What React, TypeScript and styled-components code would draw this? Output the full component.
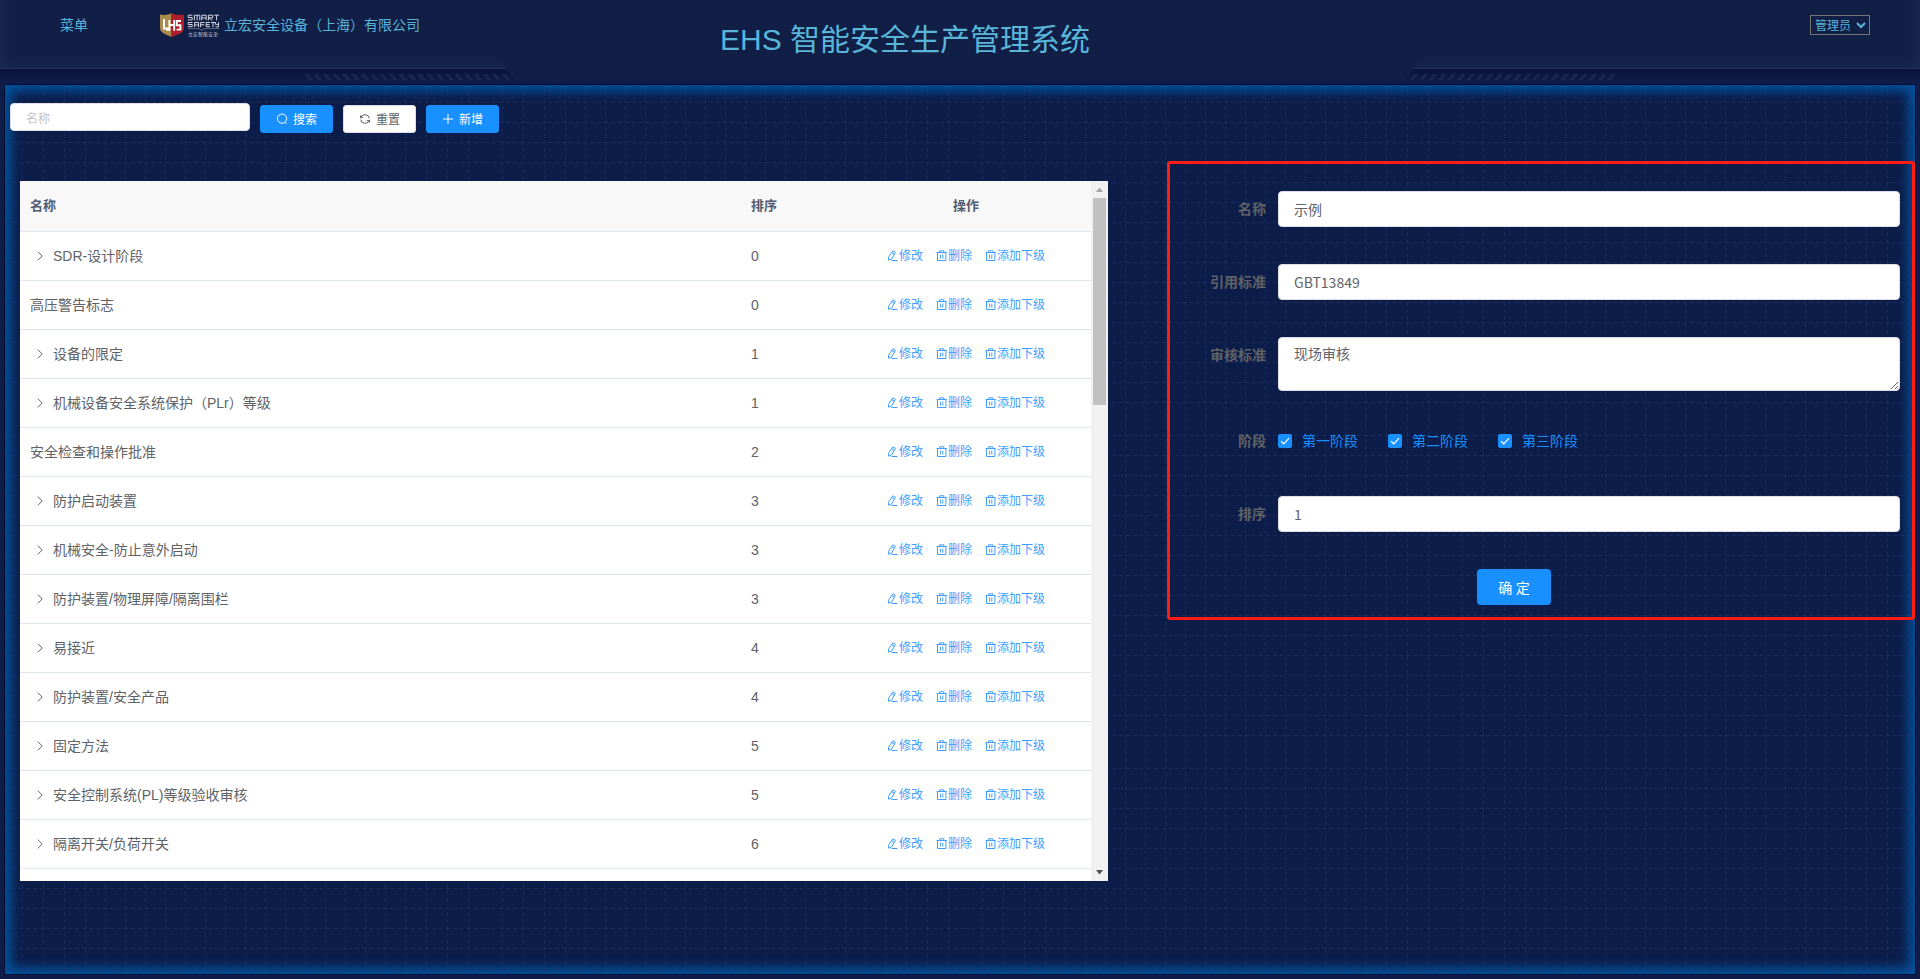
import React from 'react';
import styled, { createGlobalStyle, css } from 'styled-components';

const SANS = '"Liberation Sans", "Noto Sans CJK SC", sans-serif';
const BUTTON_FONT = '"Open Sans", "Noto Sans CJK SC", sans-serif';
const FIELD_FONT = '"Noto Sans CJK SC", sans-serif';

const GlobalStyle = createGlobalStyle`
  *, *::before, *::after { box-sizing: border-box; }
  body {
    margin: 0;
    background: #0e1c47;
    font-family: ${SANS};
    font-size: 14px;
  }
  button, input, textarea, select { font-family: ${BUTTON_FONT}; margin: 0; }
`;

const Page = styled.div`
  display: flex;
  flex-direction: column;
  min-height: 100vh;
`;

/* ---------- header ---------- */

const Header = styled.header`
  position: relative;
  flex: none;
  display: grid;
  grid-template-columns: 3fr 5fr;
  height: 80px;
  margin-bottom: 4px;
  background: #111e45;
  color: #5ab5da;
`;

const Decor = styled.svg<{ $side: 'left' | 'right' }>`
  position: absolute;
  top: 0;
  ${(p) => (p.$side === 'left' ? 'left: 0;' : 'right: 0; transform: scaleX(-1);')}
  pointer-events: none;
`;

const HeaderLeft = styled.div`
  position: relative;
  display: flex;
  align-items: center;
  height: 50px;
  padding-left: 60px;
`;

const HeaderLink = styled.a`
  color: inherit;
  text-decoration: none;
  line-height: 20px;
`;

const Company = styled.div`
  display: flex;
  align-items: center;
  gap: 5px;
  margin-left: 72px;
  line-height: 20px;
`;

const HeaderMain = styled.div`
  position: relative;
  display: flex;
  justify-content: space-between;
  align-items: flex-start;
  padding-right: 50px;
`;

const Title = styled.h1`
  margin: 19px 0 0;
  font-size: 30px;
  line-height: 42px;
  font-weight: 400;
`;

const UserSelect = styled.select`
  width: 60px;
  height: 20px;
  margin-top: 15px;
  padding: 0;
  border: 1px solid #767676;
  border-radius: 0;
  background: transparent;
  color: #5ab5da;
  font-size: 12px;
`;

/* ---------- panel ---------- */

const Panel = styled.main`
  position: relative;
  flex: 1;
  margin: 0 4px 4px;
  padding-bottom: 93px;
  border: 1px solid #030f35;
  background: #0c1d49;
  box-shadow: inset 0 0 12px 6px #0054a0;
`;

const GridSvg = styled.svg`
  position: absolute;
  inset: 0;
  width: 100%;
  height: 100%;
`;

const Toolbar = styled.form`
  position: relative;
  display: flex;
  align-items: flex-end;
  gap: 10px;
  height: 48px;
  padding: 18px 5px 0;
`;

const fieldBase = css`
  border: 1px solid #dcdfe6;
  border-radius: 4px;
  background: #fff;
  color: #606266;
  font-family: ${FIELD_FONT};
  outline: none;
`;

const SearchInput = styled.input`
  ${fieldBase}
  align-self: flex-start;
  width: 240px;
  height: 28px;
  padding: 0 15px;
  font-size: 12px;
  &::placeholder { color: #c0c4cc; opacity: 1; }
`;

const ToolButton = styled.button<{ $plain?: boolean }>`
  display: flex;
  align-items: center;
  gap: 5px;
  height: 28px;
  padding: 0 15px;
  border: 1px solid ${(p) => (p.$plain ? '#dcdfe6' : '#1890ff')};
  border-radius: 3px;
  background: ${(p) => (p.$plain ? '#fff' : '#1890ff')};
  color: ${(p) => (p.$plain ? '#606266' : '#fff')};
  font-size: 12px;
  cursor: pointer;
`;

const Content = styled.div`
  position: relative;
  display: grid;
  grid-template-columns: minmax(0, 1088fr) minmax(0, 748fr);
  align-items: start;
  gap: 59px;
  margin-top: 28px;
  padding-left: 15px;
`;

/* ---------- table ---------- */

const TableBox = styled.section`
  display: flex;
  height: 700px;
  margin-top: 20px;
  background: #fff;
`;

const TableScroll = styled.div`
  flex: 1;
  min-width: 0;
  overflow: hidden;
`;

const Table = styled.table`
  width: 100%;
  border-collapse: separate;
  border-spacing: 0;
  table-layout: fixed;
`;

const Col = styled.col<{ $w?: number }>`
  ${(p) => (p.$w ? `width: ${p.$w}px;` : '')}
`;

const Th = styled.th<{ $center?: boolean }>`
  height: 51px;
  padding: 0 10px 3px;
  border-bottom: 1px solid #dfe6ec;
  background: #f8f8f9;
  color: #515a6e;
  font-size: 13px;
  text-align: ${(p) => (p.$center ? 'center' : 'left')};
`;

const Td = styled.td`
  height: 49px;
  padding: 0 10px;
  border-bottom: 1px solid #dfe6ec;
  color: #606266;
  font-size: 14px;
  line-height: 22px;
`;

const NameCell = styled.div`
  display: flex;
  align-items: center;
`;

const Expander = styled.button`
  display: flex;
  align-items: center;
  justify-content: center;
  width: 20px;
  height: 20px;
  margin-right: 3px;
  padding: 0;
  border: 0;
  background: none;
  color: #606266;
  cursor: pointer;
`;

const Actions = styled.div`
  display: flex;
  justify-content: center;
  gap: 13px;
`;

const TextButton = styled.button`
  display: flex;
  align-items: center;
  padding: 0;
  border: 0;
  background: none;
  color: #409eff;
  font-size: 12px;
  line-height: 16px;
  cursor: pointer;
`;

const ScrollTrack = styled.div`
  flex: none;
  display: flex;
  flex-direction: column;
  justify-content: space-between;
  width: 17px;
  background: #f1f1f1;
`;

const ScrollThumb = styled.div`
  height: 207px;
  margin: 0 2px auto;
  background: #c1c1c1;
`;

/* ---------- form ---------- */

const FormBox = styled.form`
  display: flex;
  flex-direction: column;
  gap: 37px;
  padding: 27px 12px 12px 0;
  border: 3px solid #ff1c12;
  border-radius: 3px;
`;

const FormRow = styled.div<{ $compact?: boolean }>`
  display: grid;
  grid-template-columns: 108px minmax(0, 1fr);
  line-height: ${(p) => (p.$compact ? 26 : 36)}px;
  min-height: ${(p) => (p.$compact ? 31 : 36)}px;
`;

const labelText = css`
  padding-right: 12px;
  color: #606266;
  font-size: 14px;
  font-weight: 700;
  text-align: right;
`;

const Label = styled.label`
  ${labelText}
`;

const GroupLabel = styled.span`
  ${labelText}
`;

const TextField = styled.input`
  ${fieldBase}
  width: 100%;
  height: 36px;
  padding: 0 15px 1px;
  font-size: 14px;
`;

const TextArea = styled.textarea`
  ${fieldBase}
  display: block;
  width: 100%;
  height: 54px;
  padding: 5px 15px;
  font-size: 14px;
  line-height: 21px;
  resize: vertical;
`;

const CheckGroup = styled.div`
  display: flex;
  gap: 30px;
`;

const CheckLabel = styled.label`
  display: flex;
  align-items: center;
  gap: 10px;
  height: 26px;
  color: #1890ff;
  font-size: 14px;
`;

const CheckWrap = styled.span`
  position: relative;
  width: 14px;
  height: 14px;
  svg { position: absolute; inset: 0; pointer-events: none; opacity: 0; }
  input:checked + svg { opacity: 1; }
`;

const Check = styled.input`
  appearance: none;
  display: block;
  width: 14px;
  height: 14px;
  border: 1px solid #dcdfe6;
  border-radius: 2px;
  background: #fff;
  &:checked { border-color: #1890ff; background: #1890ff; }
`;

const FormFooter = styled.div`
  display: flex;
  justify-content: center;
  padding-right: 42px;
`;

const SubmitButton = styled.button`
  width: 74px;
  height: 36px;
  padding: 0;
  border: 0;
  border-radius: 4px;
  background: #1890ff;
  color: #fff;
  font-size: 14px;
  cursor: pointer;
`;

/* ---------- drawings ---------- */

const stroke = { fill: 'none', stroke: 'currentColor', strokeWidth: 1 } as const;

const SearchIcon = () => (
  <svg width="12" height="12" viewBox="0 0 12 12" {...stroke}>
    <circle cx="6" cy="5.6" r="4.6" />
    <path d="M8.8 9.2 10.6 11" />
  </svg>
);

const RefreshIcon = () => (
  <svg width="12" height="12" viewBox="0 0 12 12" {...stroke}>
    <path d="M1.6 5.2V2.2M1.6 4.3H4.4" />
    <path d="M2 4.1A4.4 4.4 0 0 1 10.3 5.4" />
    <path d="M10.4 6.8v3M10.4 7.7H7.6" />
    <path d="M10 7.9A4.4 4.4 0 0 1 1.7 6.6" />
  </svg>
);

const PlusIcon = () => (
  <svg width="12" height="12" viewBox="0 0 12 12" {...stroke}>
    <path d="M6 1v10M1 6h10" />
  </svg>
);

const EditIcon = () => (
  <svg width="12" height="12" viewBox="0 0 12 12" {...stroke}>
    <path d="M5.8 0.8 8.4 2.2 4.6 9 1.4 10.2 1.6 7.2Z" strokeLinejoin="round" />
    <path d="M4.8 2.6 7.4 4.1M4.4 10.5h6.2" />
  </svg>
);

const DeleteIcon = () => (
  <svg width="12" height="12" viewBox="0 0 12 12" {...stroke}>
    <path d="M0.6 2.5h10.2M3.6 2.3V0.8h4.2v1.5M1.5 2.6v7.9h8.4V2.6M4.6 4.6v4M6.8 4.6v4" />
  </svg>
);

const ChevronIcon = () => (
  <svg width="12" height="12" viewBox="0 0 12 12" {...stroke}>
    <path d="M3.8 1.6 8.2 6 3.8 10.4" />
  </svg>
);

const CheckMark = () => (
  <svg width="14" height="14" viewBox="0 0 14 14" fill="none" stroke="#fff" strokeWidth="1.2">
    <path d="M3 7.2 5.8 9.8 11 4.2" />
  </svg>
);

const Arrow = ({ up }: { up?: boolean }) => (
  <svg width="17" height="17" viewBox="0 0 17 17">
    <path d={up ? 'M8.5 6.5 12 11H5Z' : 'M8.5 10.5 5 6h7Z'} fill={up ? '#a3a3a3' : '#505050'} />
  </svg>
);

const LogoText = styled.text`
  font-family: ${SANS};
  fill: #c3c8d6;
`;

const Logo = () => (
  <svg width="59" height="24" viewBox="0 0 59 24" role="img" aria-label="LHS Smart Safety">
    <path d="M0 1.5C5 2.4 9 1.8 11.5 0V24C8 21.5 0 21 0 15Z" fill="#a78c4e" />
    <path d="M24 1.5C19 2.4 14 1.8 11.5 0V24C16 21.5 24 21 24 15Z" fill="#b01d2b" />
    <path
      d="M4 6v9.5h3.4v2.6M9.4 7v10.8M9.4 12h4.2M14.2 7v10.8M21 8h-4.2v4.2h3.6v4.4h-3.8"
      fill="none"
      stroke="#fff"
      strokeWidth="1.9"
    />
    <g fill="none" stroke="#e4e7ee" strokeWidth="0.9">
      <path d="M32.5 2.2h-4.3v2.3h4v2.4h-4.4M34.4 7.4V2.2h5.4v5.2M37.1 2.2v5.2M41.8 7.4V2.2h4.4v5.2M41.8 5h4.4M48.4 7.4V2.2h4.3v2.6h-4.2l4 2.6M54.2 2.2H59M56.6 2.2v5.2" />
      <path d="M32.5 9.5h-4.3v2h4v2.2h-4.4M34.6 14.2V9.5h4v4.7M34.6 12h4M40.6 14.2V9.5h4M40.6 11.8h3.6M50 9.5h-3.8v4.2H50M46.2 11.6h3.4M51 9.5h4M53 9.5v4.7M55.4 9v2.4h3.2M58.6 9v4.9h-3" />
    </g>
    <path d="M28 15.6h11l2.6 1.6 2.6-1.6H59" fill="none" stroke="#8f97ad" strokeWidth="0.6" />
    <LogoText x="28" y="22.6" fontSize="5">
      立宏智能安全
    </LogoText>
  </svg>
);

const HATCHES = Array.from({ length: 22 }, (_, i) => 304 + i * 9.4);

const HeaderDecor = ({ side }: { side: 'left' | 'right' }) => (
  <Decor $side={side} width="560" height="80" viewBox="0 0 560 80">
    <defs>
      <linearGradient id={`glow-${side}`} x1="0" y1="0" x2="0" y2="1">
        <stop offset="0" stopColor="#1b2a55" stopOpacity="0" />
        <stop offset="1" stopColor="#1b2a55" stopOpacity="0.5" />
      </linearGradient>
      <linearGradient id={`edge-${side}`}>
        <stop offset="0" stopColor="#1b2a55" stopOpacity="0.6" />
        <stop offset="1" stopColor="#1b2a55" stopOpacity="0" />
      </linearGradient>
      <linearGradient id={`slot-${side}`} x1="0" y1="0" x2="0" y2="1">
        <stop offset="0" stopColor="#081335" />
        <stop offset="1" stopColor="#0d1b46" />
      </linearGradient>
    </defs>
    <rect width="14" height="68" fill={`url(#edge-${side})`} />
    <path d="M0 54H500L508 68H0Z" fill={`url(#glow-${side})`} />
    <path d="M0 68H506L517 80H0Z" fill={`url(#slot-${side})`} />
    <path d="M0 68.5H506" fill="none" stroke="#22315f" strokeWidth="1" />
    <path d="M506 68.5 517 80" fill="none" stroke="#1a2850" strokeWidth="1" />
    {HATCHES.map((x) => (
      <path key={x} d={`M${x} 74h4l5 6h-4Z`} fill="#1a2850" />
    ))}
  </Decor>
);

const LINES_X = [17, 38, 59, ...Array.from({ length: 17 }, (_, i) => 80 + i * 20), 421, 442, 463];
const LINES_Y = Array.from({ length: 16 }, (_, i) => 17 + i * 20);

const GridBackground = () => (
  <GridSvg aria-hidden="true">
    <defs>
      <pattern id="cells" width="480" height="333" patternUnits="userSpaceOnUse">
        <g stroke="#2a3b78" strokeOpacity="0.42" strokeDasharray="4 3">
          {LINES_X.map((x) => (
            <path key={x} d={`M${x + 0.5} 0V333`} />
          ))}
          {LINES_Y.map((y) => (
            <path key={y} d={`M0 ${y + 0.5}H480`} />
          ))}
        </g>
      </pattern>
    </defs>
    <rect width="100%" height="100%" fill="url(#cells)" />
  </GridSvg>
);

/* ---------- data ---------- */

interface Item {
  name: string;
  order: number;
  leaf?: boolean;
}

const ITEMS: Item[] = [
  { name: 'SDR-设计阶段', order: 0 },
  { name: '高压警告标志', order: 0, leaf: true },
  { name: '设备的限定', order: 1 },
  { name: '机械设备安全系统保护（PLr）等级', order: 1 },
  { name: '安全检查和操作批准', order: 2, leaf: true },
  { name: '防护启动装置', order: 3 },
  { name: '机械安全-防止意外启动', order: 3 },
  { name: '防护装置/物理屏障/隔离围栏', order: 3 },
  { name: '易接近', order: 4 },
  { name: '防护装置/安全产品', order: 4 },
  { name: '固定方法', order: 5 },
  { name: '安全控制系统(PL)等级验收审核', order: 5 },
  { name: '隔离开关/负荷开关', order: 6 },
];

const STAGES = ['第一阶段', '第二阶段', '第三阶段'];

const ItemRow = ({ item }: { item: Item }) => (
  <tr>
    <Td>
      <NameCell>
        {!item.leaf && (
          <Expander type="button" aria-label="展开">
            <ChevronIcon />
          </Expander>
        )}
        {item.name}
      </NameCell>
    </Td>
    <Td>{item.order}</Td>
    <Td>
      <Actions>
        <TextButton type="button"><EditIcon />修改</TextButton>
        <TextButton type="button"><DeleteIcon />删除</TextButton>
        <TextButton type="button"><DeleteIcon />添加下级</TextButton>
      </Actions>
    </Td>
  </tr>
);

export default function App() {
  return (
    <Page>
      <GlobalStyle />
      <Header>
        <HeaderDecor side="left" />
        <HeaderDecor side="right" />
        <HeaderLeft>
          <HeaderLink href="#menu">菜单</HeaderLink>
          <Company>
            <Logo />
            立宏安全设备（上海）有限公司
          </Company>
        </HeaderLeft>
        <HeaderMain>
          <Title>EHS 智能安全生产管理系统</Title>
          <UserSelect aria-label="用户">
            <option>管理员</option>
          </UserSelect>
        </HeaderMain>
      </Header>
      <Panel>
        <GridBackground />
        <Toolbar onSubmit={(e) => e.preventDefault()}>
          <SearchInput placeholder="名称" aria-label="名称" />
          <ToolButton type="submit"><SearchIcon />搜索</ToolButton>
          <ToolButton type="reset" $plain><RefreshIcon />重置</ToolButton>
          <ToolButton type="button"><PlusIcon />新增</ToolButton>
        </Toolbar>
        <Content>
          <TableBox>
            <TableScroll>
              <Table>
                <colgroup>
                  <Col />
                  <Col $w={100} />
                  <Col $w={250} />
                </colgroup>
                <thead>
                  <tr>
                    <Th>名称</Th>
                    <Th>排序</Th>
                    <Th $center>操作</Th>
                  </tr>
                </thead>
                <tbody>
                  {ITEMS.map((item) => (
                    <ItemRow key={item.name} item={item} />
                  ))}
                </tbody>
              </Table>
            </TableScroll>
            <ScrollTrack>
              <Arrow up />
              <ScrollThumb />
              <Arrow />
            </ScrollTrack>
          </TableBox>
          <FormBox onSubmit={(e) => e.preventDefault()}>
            <FormRow>
              <Label htmlFor="name">名称</Label>
              <TextField id="name" defaultValue="示例" />
            </FormRow>
            <FormRow>
              <Label htmlFor="standard">引用标准</Label>
              <TextField id="standard" defaultValue="GBT13849" />
            </FormRow>
            <FormRow>
              <Label htmlFor="audit">审核标准</Label>
              <TextArea id="audit" defaultValue="现场审核" />
            </FormRow>
            <FormRow $compact role="group" aria-labelledby="stage">
              <GroupLabel id="stage">阶段</GroupLabel>
              <CheckGroup>
                {STAGES.map((s) => (
                  <CheckLabel key={s}>
                    <CheckWrap>
                      <Check type="checkbox" defaultChecked />
                      <CheckMark />
                    </CheckWrap>
                    {s}
                  </CheckLabel>
                ))}
              </CheckGroup>
            </FormRow>
            <FormRow>
              <Label htmlFor="order">排序</Label>
              <TextField id="order" defaultValue="1" />
            </FormRow>
            <FormFooter>
              <SubmitButton type="submit">确 定</SubmitButton>
            </FormFooter>
          </FormBox>
        </Content>
      </Panel>
    </Page>
  );
}
